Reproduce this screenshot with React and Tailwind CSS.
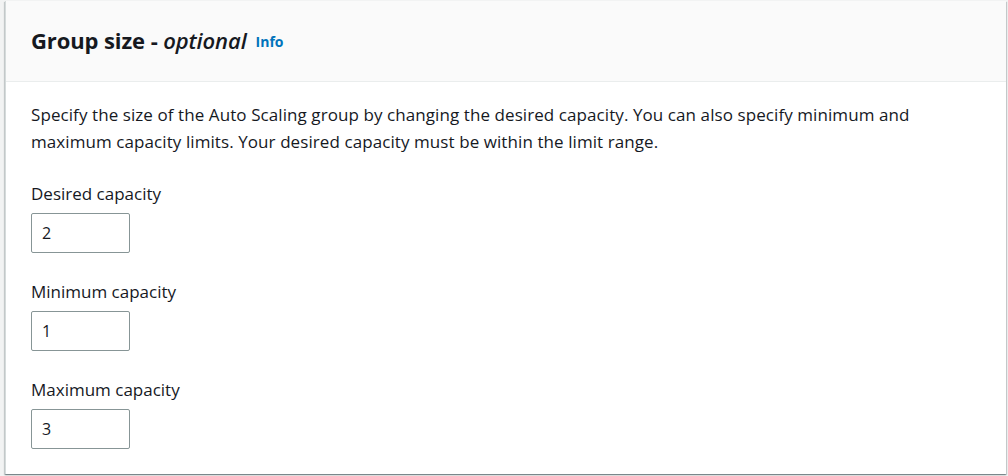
import React from "react";

const FIELDS = [
    { label: "Desired capacity", value: "2" },
    { label: "Minimum capacity", value: "1" },
    { label: "Maximum capacity", value: "3" },
];

export default function App() {
    return (
        <div className="h-[476px] w-[1008px] bg-[#f2f3f3] pl-[5px] pr-[2px] pt-[1px] pb-[2px] font-['Open_Sans',sans-serif] text-[#16191f]">
            <div className="h-full bg-white border-l border-[#d5dbdb] shadow-[0_1px_1px_0_rgba(0,28,36,0.3),1px_1px_1px_0_rgba(0,28,36,0.15),-1px_1px_1px_0_rgba(0,28,36,0.15)]">
                {/* header */}
                <div className="h-[81px] bg-[#fafafa] border-b border-[#eaeded] px-[25px] pb-[3px] flex items-center">
                    <h2 className="text-[22px] font-bold leading-none tracking-[-0.1px]">
                        Group size - <i className="font-semibold">optional</i>
                    </h2>
                    <a className="ml-[9px] mt-[3px] text-[14px] font-bold text-[#0073bb]">Info</a>
                </div>

                {/* body */}
                <div className="px-[25px] pt-[19px]">
                    <p className="text-[17px] leading-[27px] tracking-[0.08px] max-w-[910px]">
                        Specify the size of the Auto Scaling group by changing the desired capacity. You can also specify minimum and maximum capacity limits. Your desired capacity must be within the limit range.
                    </p>

                    <div className="mt-[28px] flex flex-col gap-[28px]">
                        {FIELDS.map((f) => (
                            <div key={f.label}>
                                <div className="text-[17px] leading-[22px]">{f.label}</div>
                                <div className="mt-[8px] w-[99px] h-[40px] border border-[#879596] rounded-[2px] px-[10px] flex items-center text-[16px]">
                                    {f.value}
                                </div>
                            </div>
                        ))}
                    </div>
                </div>
            </div>
        </div>
    );
}
